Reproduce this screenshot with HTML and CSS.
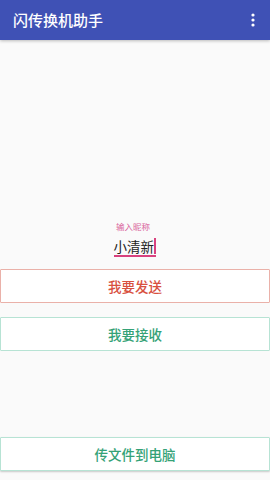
FILE: index.html
```html
<!DOCTYPE html>
<html lang="zh">
<head>
<meta charset="utf-8">
<link rel="stylesheet" href="styles.css">
</head>
<body>
<div class="app">
  <header class="appbar">
    <span class="title">闪传换机助手</span>
    <svg class="more" width="4" height="14" viewBox="0 0 4 14"><circle cx="2" cy="2" r="1.6" fill="#fff"/><circle cx="2" cy="7" r="1.6" fill="#fff"/><circle cx="2" cy="12" r="1.6" fill="#fff"/></svg>
  </header>
  <main class="content">
    <div class="field">
      <div class="label">输入昵称</div>
      <div class="input"><span>小清新</span><span class="cursor"></span></div>
    </div>
    <button class="btn btn-send">我要发送</button>
    <button class="btn btn-recv">我要接收</button>
    <button class="btn btn-pc">传文件到电脑</button>
  </main>
</div>
</body>
</html>
```
FILE: styles.css
```css
* { box-sizing: border-box; }
html, body { margin: 0; padding: 0; }
body {
  background: #fafafa;
  font-family: "Noto Sans CJK SC", "Noto Sans", sans-serif;
}
.app {
  height: 480px;
  display: flex;
  flex-direction: column;
}
.appbar {
  height: 40px;
  flex: none;
  background: #3f51b5;
  display: flex;
  align-items: center;
  justify-content: space-between;
  padding: 0 15px 0 13px;
  box-shadow: 0 1px 3px rgba(0,0,0,0.25);
  position: relative;
  z-index: 1;
}
.title {
  color: #fff;
  font-size: 15px;
  font-weight: 500;
  line-height: 20px;
}
.more { display: block; }
.content {
  flex: 1;
  display: flex;
  flex-direction: column;
  padding-top: 180px;
}
.field {
  display: flex;
  flex-direction: column;
  align-items: center;
}
.label {
  color: #d9649a;
  font-size: 8.5px;
  line-height: 12px;
  margin-right: 4px;
}
.input {
  margin-top: 4px;
  display: flex;
  align-items: center;
  height: 21px;
  border-bottom: 2px solid #d8417e;
  width: 42px;
  font-size: 13.5px;
  color: #222;
  line-height: 18px;
  margin-left: -1px;
}
.cursor {
  width: 1.5px;
  height: 16px;
  background: #d8417e;
}
.btn {
  display: block;
  width: 100%;
  height: 34px;
  background: #fff;
  font-family: inherit;
  font-size: 13.5px;
  font-weight: 500;
  padding: 0;
  margin: 0;
  border-radius: 1px;
}
.btn-send {
  margin-top: 12px;
  border: 1px solid #eab1a9;
  color: #d8503f;
}
.btn-recv {
  margin-top: 14px;
  border: 1px solid #b7e3d4;
  color: #35a277;
}
.btn-pc {
  margin-top: auto;
  margin-bottom: 9px;
  border: 1px solid #b7e3d4;
  color: #35a277;
  box-shadow: 0 1px 2px rgba(0,0,0,0.2);
}
```
